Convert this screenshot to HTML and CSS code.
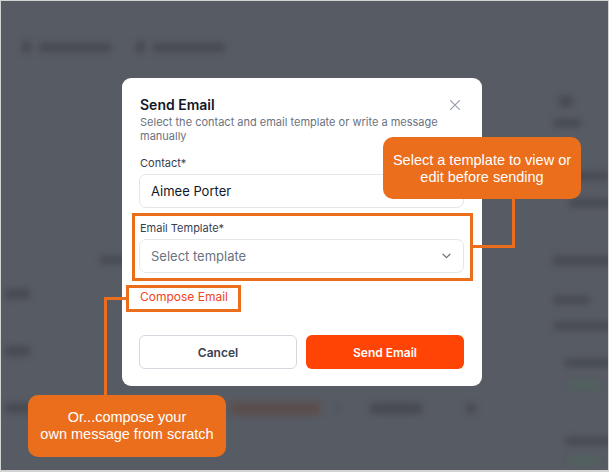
FILE: index.html
```html
<!DOCTYPE html>
<html lang="en">
<head>
    <meta charset="UTF-8">
    <meta name="viewport" content="width=device-width, initial-scale=1.0">
    <title>Send Email</title>
    <link rel="stylesheet" href="styles.css">
</head>
<body>
    <div class="screen">
        <!-- blurred page behind the dialog -->
        <div class="backdrop">
            <div class="bd-head">
                <span class="bd-item"><i class="bd-ico"></i><b class="bd-bar"></b></span>
                <span class="bd-item"><i class="bd-ico"></i><b class="bd-bar"></b></span>
            </div>
            <div class="bd-body">
                <div class="bd-main">
                    <b class="bd-col"></b>
                    <div class="bd-row"><b class="bd-cell"></b></div>
                    <div class="bd-row"><b class="bd-cell"></b></div>
                    <div class="bd-row bd-row-last">
                        <b class="bd-cell"></b>
                        <b class="bd-pill"></b>
                        <b class="bd-sep"></b>
                        <b class="bd-tag"></b>
                        <b class="bd-dot"></b>
                    </div>
                </div>
                <div class="bd-side">
                    <i class="bd-s-ico"></i>
                    <b class="bd-s bd-s1"></b>
                    <b class="bd-s bd-s2"></b>
                    <b class="bd-s bd-s3"></b>
                    <b class="bd-s bd-s4"></b>
                    <b class="bd-s bd-s5"></b>
                    <b class="bd-s bd-s6"></b>
                    <b class="bd-s bd-s7"></b>
                    <b class="bd-s bd-green"></b>
                    <b class="bd-s bd-s8"></b>
                    <b class="bd-s bd-green bd-g2"></b>
                </div>
            </div>
        </div>

        <div class="overlay">
            <div class="modal">
                <div class="modal-head">
                    <h2 class="modal-title">Send Email</h2>
                    <svg class="close" width="10" height="10" viewBox="0 0 10 10">
                        <path d="M0.6 0.6L9.4 9.4M9.4 0.6L0.6 9.4" stroke="#9ca3af" stroke-width="1.3" stroke-linecap="round"/>
                    </svg>
                </div>
                <p class="modal-sub">Select the contact and email template or write a message manually</p>

                <div class="field">
                    <label class="field-label">Contact*</label>
                    <div class="control">Aimee Porter</div>
                </div>

                <div class="field">
                    <label class="field-label">Email Template*</label>
                    <div class="control">
                        <span class="placeholder">Select template</span>
                        <svg width="9" height="6" viewBox="0 0 9 6">
                            <path d="M1 1.2L4.5 4.6L8 1.2" fill="none" stroke="#6b7280" stroke-width="1.2" stroke-linecap="round" stroke-linejoin="round"/>
                        </svg>
                    </div>
                </div>

                <a class="compose">Compose Email</a>

                <div class="actions">
                    <button class="btn btn-cancel">Cancel</button>
                    <button class="btn btn-send">Send Email</button>
                </div>
            </div>
        </div>

        <!-- annotations -->
        <div class="hl hl-template"></div>
        <div class="hl hl-compose"></div>
        <div class="wire wire-v1"></div>
        <div class="wire wire-h1"></div>
        <div class="wire wire-v2"></div>
        <div class="wire wire-h2"></div>
        <div class="callout callout-template">Select a template to view or<br>edit before sending</div>
        <div class="callout callout-compose">Or...compose your<br>own message from scratch</div>
    </div>
</body>
</html>
```

FILE: styles.css
```css
* {
    box-sizing: border-box;
}

html, body {
    margin: 0;
}

body {
    width: 609px;
    height: 472px;
    overflow: hidden;
    font-family: Inter, "Noto Sans", sans-serif;
}

.screen {
    position: relative;
    width: 609px;
    height: 472px;
    background-color: #575b63;
    overflow: hidden;
}

.screen::after {
    content: "";
    position: absolute;
    inset: 0;
    border: 1px solid #d3d3d3;
    border-bottom-width: 2px;
    pointer-events: none;
}

/* backdrop */

.backdrop {
    filter: blur(3px);
}

.backdrop b, .backdrop i {
    display: block;
    background-color: rgba(40, 43, 51, 0.35);
    border-radius: 3px;
}

.bd-head {
    display: flex;
    gap: 25px;
    height: 60px;
    padding: 34px 0 0 22px;
}

.bd-item {
    display: flex;
    align-items: center;
    gap: 8px;
}

.bd-ico {
    width: 9px;
    height: 12px;
}

.bd-bar {
    width: 72px;
    height: 9px;
}

.bd-body {
    display: flex;
}

.bd-main {
    flex: 1;
    padding-top: 196px;
}

.bd-col {
    width: 26px;
    height: 8px;
    margin-left: 100px;
}

.bd-row {
    display: flex;
    align-items: center;
    height: 10px;
    margin-top: 25px;
    padding-left: 5px;
}

.bd-row + .bd-row {
    margin-top: 47px;
}

.bd-row-last {
    margin-top: 48px;
}

.bd-cell {
    width: 25px;
    height: 10px;
}

.bd-pill {
    width: 90px;
    height: 13px;
    margin-left: 200px;
    background-color: rgba(95, 68, 58, 0.55) !important;
}

.bd-sep {
    width: 2px;
    height: 10px;
    margin-left: 16px;
}

.bd-tag {
    width: 52px;
    height: 11px;
    margin-left: 32px;
}

.bd-dot {
    width: 10px;
    height: 9px;
    margin-left: 44px;
}

.bd-side {
    width: 70px;
    padding-top: 36px;
    padding-left: 14px;
}

.bd-s-ico {
    width: 14px;
    height: 11px;
    margin-left: 6px;
}

.bd-s {
    height: 8px;
}

.bd-s1 { width: 28px; margin-top: 12px; }
.bd-s2 { width: 50px; margin-top: 45px; margin-left: 6px; }
.bd-s3 { width: 45px; margin-top: 19px; margin-left: 16px; }
.bd-s4 { width: 70px; margin-top: 49px; height: 9px; }
.bd-s5 { width: 37px; margin-top: 31px; margin-left: 0; }
.bd-s6 { width: 60px; margin-top: 18px; }
.bd-s7 { width: 50px; margin-top: 29px; margin-left: 12px; }
.bd-s8 { width: 50px; margin-top: 48px; margin-left: 12px; }

.bd-green {
    width: 30px;
    margin-top: 14px;
    margin-left: 16px;
    background-color: rgba(70, 108, 88, 0.45) !important;
}

.bd-g2 {
    margin-top: 12px;
}

/* dialog */

.overlay {
    position: absolute;
    inset: 0;
    padding: 78px 0 0 122px;
}

.modal {
    width: 360px;
    padding: 18px 18px 17px 17px;
    background-color: #fff;
    border-radius: 9px;
}

.modal-head {
    display: flex;
    justify-content: space-between;
    align-items: flex-start;
}

.modal-title {
    margin: 0 0 0 1px;
    font-size: 14px;
    line-height: 18px;
    font-weight: 600;
    color: #111827;
}

.close {
    margin: 4px 4px 0 0;
}

.modal-sub {
    margin: 2px 0 0 1px;
    font-size: 11px;
    line-height: 13.5px;
    color: #6b7280;
}

.field {
    margin-top: 13px;
}

.field-label {
    display: block;
    margin-left: 1px;
    font-size: 11px;
    line-height: 14px;
    color: #374151;
}

.control {
    display: flex;
    justify-content: space-between;
    align-items: center;
    height: 34px;
    margin-top: 4px;
    padding: 0 12px 0 11px;
    border: 1px solid #e3e6eb;
    border-radius: 7px;
    font-size: 13px;
    color: #111827;
}

.placeholder {
    color: #6b7280;
}

.compose {
    display: block;
    margin: 16px 0 0 1px;
    font-size: 12px;
    line-height: 16px;
    color: #f2431d;
}

.actions {
    display: grid;
    grid-template-columns: 1fr 1fr;
    gap: 9px;
    margin-top: 30px;
}

.btn {
    height: 34px;
    border-radius: 6px;
    font-family: Inter, "Noto Sans", sans-serif;
    font-size: 12px;
    font-weight: 600;
}

.btn-cancel {
    background-color: #fff;
    border: 1px solid #d4d8df;
    color: #374151;
}

.btn-send {
    background-color: #ff4405;
    border: none;
    color: #fff;
}

/* annotations */

.hl {
    position: absolute;
    border: 3px solid #eb6e1d;
}

.hl-template {
    left: 132px;
    top: 213px;
    width: 341px;
    height: 68px;
}

.hl-compose {
    left: 126px;
    top: 285px;
    width: 115px;
    height: 27px;
}

.wire {
    position: absolute;
    background-color: #eb6e1d;
}

.wire-v1 { left: 512px; top: 198px; width: 3px; height: 50px; }
.wire-h1 { left: 472px; top: 245px; width: 43px; height: 3px; }
.wire-v2 { left: 104px; top: 297px; width: 3px; height: 98px; }
.wire-h2 { left: 104px; top: 297px; width: 23px; height: 3px; }

.callout {
    position: absolute;
    width: 198px;
    height: 62px;
    background-color: #eb6e1d;
    border-radius: 10px;
    color: #fff;
    font-family: "Liberation Sans", Arial, sans-serif;
    font-size: 14.5px;
    line-height: 17px;
    text-align: center;
}

.callout-template {
    left: 383px;
    top: 137px;
    padding-top: 15px;
}

.callout-compose {
    left: 28px;
    top: 395px;
    padding-top: 14px;
}
```
